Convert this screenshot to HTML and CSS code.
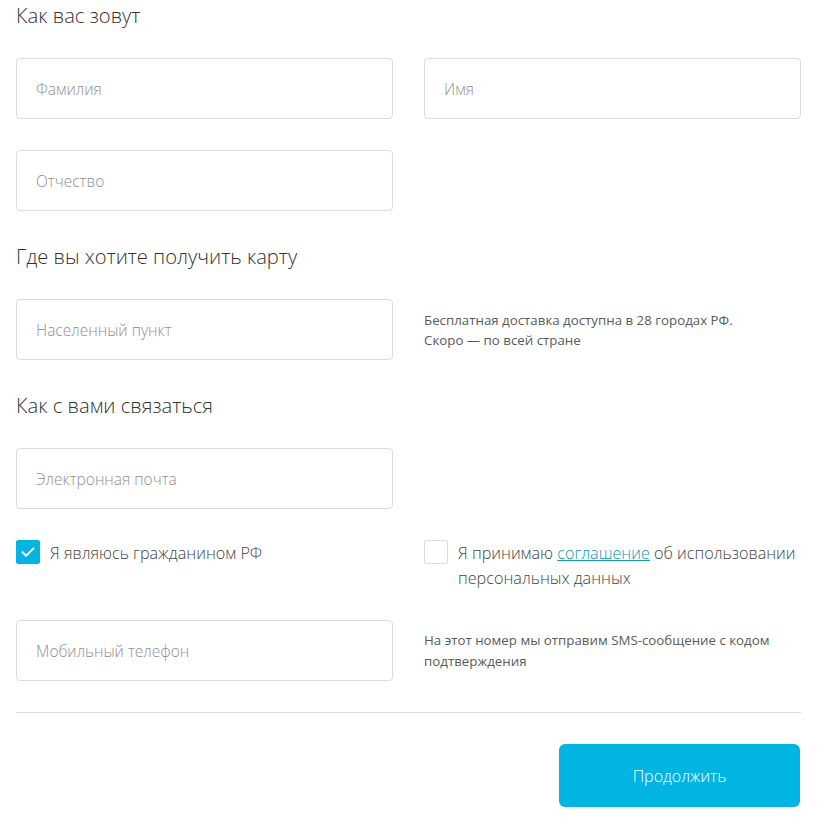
FILE: index.html
```html
<!DOCTYPE html>
<html lang="ru">
<head>
<meta charset="utf-8">
<link rel="stylesheet" href="styles.css">
</head>
<body>
<form class="form">
  <h2 class="title">Как вас зовут</h2>
  <div class="grid">
    <div class="field"><input class="input" placeholder="Фамилия"></div>
    <div class="field"><input class="input" placeholder="Имя"></div>
    <div class="field"><input class="input" placeholder="Отчество"></div>
  </div>

  <h2 class="title">Где вы хотите получить карту</h2>
  <div class="grid">
    <div class="field"><input class="input" placeholder="Населенный пункт"></div>
    <p class="hint">Бесплатная доставка доступна в 28 городах РФ.<br>Скоро — по всей стране</p>
  </div>

  <h2 class="title">Как с вами связаться</h2>
  <div class="grid">
    <div class="field"><input class="input" placeholder="Электронная почта"></div>
  </div>
  <div class="grid checks">
    <label class="check">
      <span class="box box-on"><svg viewBox="0 0 24 24" width="24" height="24"><path d="M6.5 12.2l3.6 3.6 7.4-7.4" fill="none" stroke="#fff" stroke-width="2" stroke-linecap="round" stroke-linejoin="round"/></svg></span>
      <span class="check-text">Я являюсь гражданином РФ</span>
    </label>
    <label class="check">
      <span class="box"></span>
      <span class="check-text">Я принимаю <a class="link" href="#">соглашение</a> об использовании персональных данных</span>
    </label>
  </div>
  <div class="grid grid-last">
    <div class="field"><input class="input" placeholder="Мобильный телефон"></div>
    <p class="hint hint-tall">На этот номер мы отправим SMS-сообщение с кодом подтверждения</p>
  </div>
  <hr class="divider">
  <div class="actions">
    <button type="button" class="button">Продолжить</button>
  </div>
</form>
</body>
</html>
```
FILE: styles.css
```css
* { box-sizing: border-box; }
html, body { margin: 0; padding: 0; background: #fff; }
body {
  font-family: "Open Sans", "Noto Sans", Arial, sans-serif;
  color: #555;
}
.form {
  width: 785px;
  margin-left: 16px;
  padding-top: 3px;
  display: flex;
  flex-direction: column;
}
.title {
  margin: 0 0 31px;
  font-size: 20.2px;
  line-height: 24px;
  font-weight: 300;
  color: #333;
}
.grid {
  display: grid;
  grid-template-columns: 377px 377px;
  column-gap: 31px;
  row-gap: 31px;
  align-items: center;
  margin-bottom: 33px;
}
.grid-last { margin-bottom: 31px; }
.field { display: flex; }
.input {
  width: 100%;
  height: 61px;
  border: 1px solid #dcdcdc;
  border-radius: 4px;
  padding: 0 19px;
  font-family: inherit;
  font-size: 15.5px;
  font-weight: 300;
  color: #333;
  outline: none;
}
.input::placeholder { color: #8f8f8f; }
.hint {
  margin: 0;
  font-size: 13.3px;
  font-weight: 400;
  line-height: 20px;
  color: #5a5a5a;
}
.hint-tall { line-height: 21px; padding-right: 20px; }
.checks { align-items: start; margin-top: -2px; margin-bottom: 29px; }
.check {
  display: flex;
  align-items: flex-start;
  gap: 10px;
  cursor: pointer;
}
.box {
  flex: 0 0 24px;
  width: 24px;
  height: 24px;
  border: 1px solid #dcdcdc;
  border-radius: 2px;
  background: #fff;
  display: flex;
}
.box-on { background: #00b5e2; border-color: #00b5e2; }
.box-on svg { margin: -1px; }
.check-text {
  font-size: 16.2px;
  font-weight: 300;
  line-height: 25px;
  color: #444;
  margin-top: 1px;
}
.link { color: #1596b3; text-decoration: underline; }
.divider {
  margin: 0 0 31px;
  border: 0;
  border-top: 1px solid #dedede;
  height: 0;
}
.actions { display: flex; justify-content: flex-end; padding-right: 1px; }
.button {
  width: 241px;
  height: 63px;
  border: 0;
  border-radius: 6px;
  background: #00b5e2;
  color: #fff;
  font-family: inherit;
  font-size: 16px;
  font-weight: 300;
  cursor: pointer;
}
```
